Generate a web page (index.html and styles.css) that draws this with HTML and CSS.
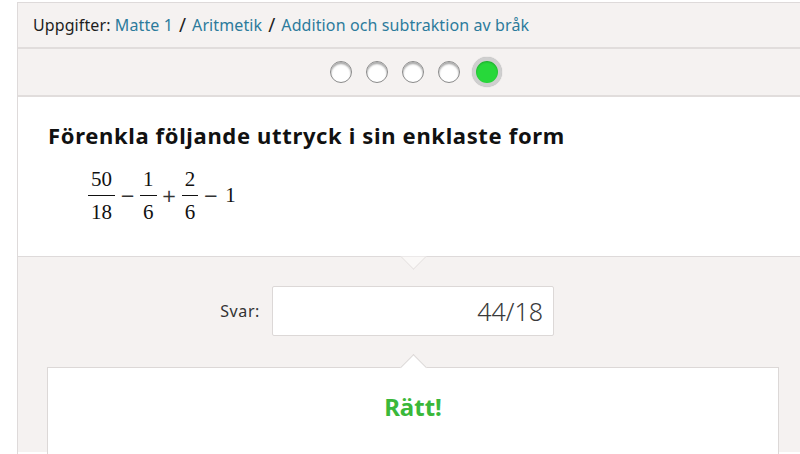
FILE: index.html
```html
<!DOCTYPE html>
<html lang="sv">
<head>
<meta charset="utf-8">
<link rel="stylesheet" href="styles.css">
</head>
<body>
<div class="card">
  <div class="crumbs">
    <span class="lbl">Uppgifter:</span>&nbsp;<a class="lnk">Matte 1</a><span class="sep">/</span><a class="lnk">Aritmetik</a><span class="sep">/</span><a class="lnk">Addition och subtraktion av bråk</a>
  </div>
  <div class="progress">
    <span class="dot"></span>
    <span class="dot"></span>
    <span class="dot"></span>
    <span class="dot"></span>
    <span class="dot active"></span>
  </div>
  <div class="question">
    <h1 class="title">Förenkla följande uttryck i sin enklaste form</h1>
    <div class="math">
      <span class="frac"><span class="num">50</span><span class="den">18</span></span>
      <span class="op">−</span>
      <span class="frac"><span class="num">1</span><span class="den">6</span></span>
      <span class="op">+</span>
      <span class="frac"><span class="num">2</span><span class="den">6</span></span>
      <span class="op">−</span>
      <span class="int">1</span>
    </div>
    <span class="notch-down"></span>
  </div>
  <div class="answer">
    <div class="row">
      <label class="svar">Svar:</label>
      <div class="input">44/18</div>
    </div>
    <div class="feedback">
      <span class="notch-up"></span>
      <div class="ok">Rätt!</div>
    </div>
  </div>
</div>
</body>
</html>
```
FILE: styles.css
```css
html, body { margin: 0; padding: 0; }
body {
  background: #ffffff;
  overflow: hidden;
  width: 800px;
  height: 454px;
  font-family: "Noto Sans", "Open Sans", sans-serif;
  color: #1e1e1e;
}
.card {
  margin: 2px 0 0 17px;
  width: 791px;
  height: 452px;
  overflow: hidden;
  border: 1px solid #dedada;
  border-bottom: none;
  box-sizing: border-box;
}
.crumbs {
  height: 44px;
  background: #f5f2f1;
  border-bottom: 2px solid #e1dddc;
  display: flex;
  align-items: center;
  padding-left: 15px;
  font-size: 16px;
  letter-spacing: 0.1px;
  white-space: nowrap;
}
.lbl { color: #1e1e1e; }
.lnk { color: #2c7b9c; }
.sep { color: #222; font-size: 19px; margin: 0 6px; }
.progress {
  height: 46px;
  background: #f5f2f1;
  border-bottom: 2px solid #e1dddc;
  display: flex;
  align-items: center;
  justify-content: center;
  gap: 14px;
  padding-left: 7px;
}
.dot {
  width: 22px;
  height: 22px;
  border-radius: 50%;
  box-sizing: border-box;
  background: #ffffff;
  border: 1px solid #8a8a8a;
  box-shadow: inset 0 2px 2px rgba(0,0,0,0.35);
}
.dot.active {
  width: 30px;
  height: 30px;
  margin-left: -2px;
  background: #27d83a;
  border: 4px solid #cfcfcf;
  box-shadow: inset 0 1px 2px rgba(0,0,0,0.25), 0 0 1px #aaa;
}
.question {
  position: relative;
  background: #ffffff;
  height: 160px;
  box-sizing: border-box;
  padding: 23px 30px 0 30px;
  border-bottom: 1px solid #dedada;
}
.title {
  margin: 0;
  font-size: 22px;
  font-weight: 700;
  color: #111;
  letter-spacing: 0.65px;
}
.math {
  margin: 17px 0 0 40px;
  display: flex;
  align-items: center;
  font-family: "Liberation Serif", "DejaVu Serif", serif;
  font-size: 21px;
  color: #111;
}
.frac {
  display: inline-flex;
  flex-direction: column;
  align-items: center;
}
.num { line-height: 24px; padding: 0 3px 4px; border-bottom: 1px solid #111; align-self: stretch; text-align: center; }
.den { line-height: 24px; padding: 4px 3px 0; }
.op {
  margin: 0 5px;
  font-family: "DejaVu Sans", sans-serif;
  font-size: 18px;
  color: #333;
  line-height: 24px;
}
.int { margin-left: 2px; }
.notch-down {
  position: absolute;
  left: 386px;
  bottom: -10px;
  width: 18px;
  height: 18px;
  background: #faf8f7;
  border-right: 1px solid #e3dfde;
  border-bottom: 1px solid #e3dfde;
  transform: rotate(45deg);
  clip-path: polygon(100% 0, 100% 100%, 0 100%);
  z-index: 2;
}
.answer {
  background: #f5f2f1;
  padding-top: 29px;
  height: 195px;
  box-sizing: border-box;
}
.row {
  display: flex;
  align-items: center;
  height: 50px;
}
.svar {
  width: 254px;
  text-align: right;
  font-size: 16px;
  letter-spacing: 0.6px;
  color: #333;
  padding-right: 12px;
  box-sizing: border-box;
}
.input {
  width: 282px;
  height: 50px;
  box-sizing: border-box;
  background: #fff;
  border: 1px solid #dcd8d7;
  border-radius: 2px;
  text-align: right;
  padding-right: 10px;
  font-size: 25px;
  line-height: 48px;
  color: #3a3a3a;
  font-weight: 300;
}
.feedback {
  position: relative;
  margin: 31px 0 0 29px;
  width: 732px;
  height: 90px;
  background: #fff;
  border: 1px solid #dcd8d7;
  box-sizing: border-box;
}
.notch-up {
  position: absolute;
  left: 356px;
  top: -10px;
  width: 18px;
  height: 18px;
  background: #fff;
  border-left: 1px solid #dcd8d7;
  border-top: 1px solid #dcd8d7;
  transform: rotate(45deg);
}
.ok {
  text-align: center;
  font-size: 24px;
  font-weight: 700;
  color: #3ab83a;
  margin-top: 22px;
}
```
